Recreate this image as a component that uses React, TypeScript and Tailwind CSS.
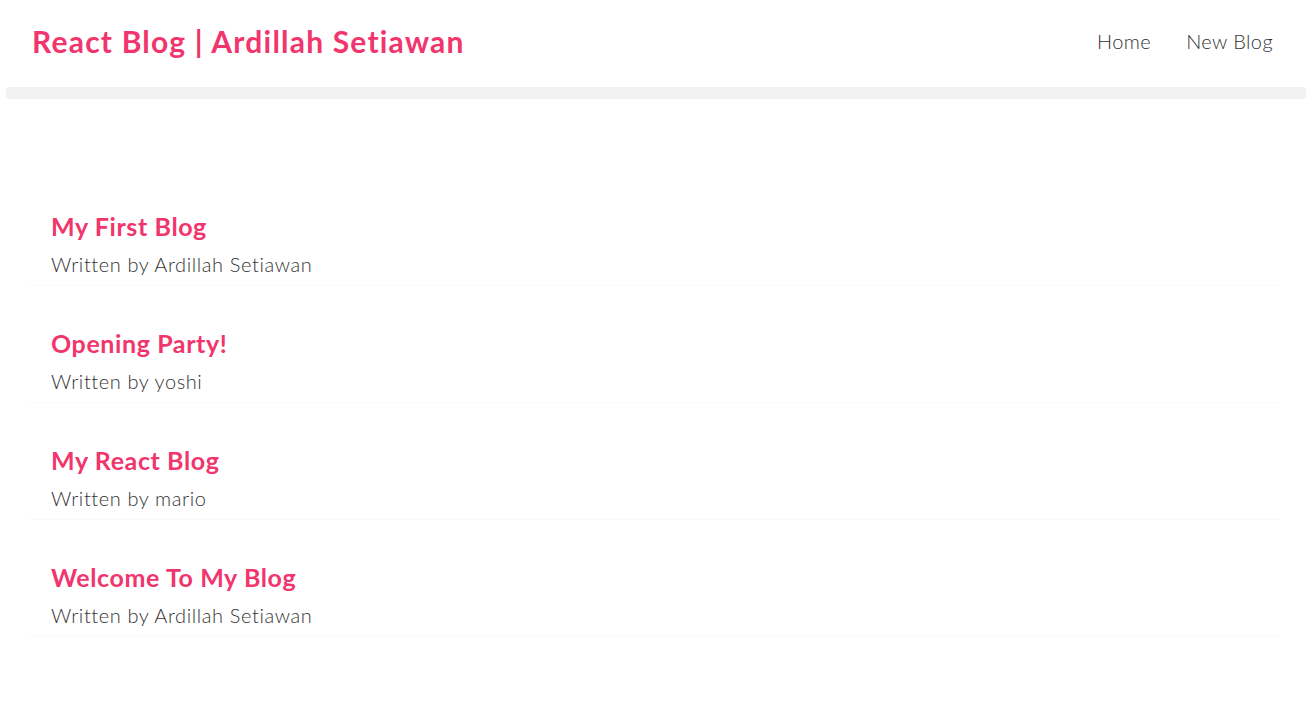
import React from 'react';

const blogs = [
  { id: 1, title: 'My First Blog', author: 'Ardillah Setiawan' },
  { id: 2, title: 'Opening Party!', author: 'yoshi' },
  { id: 3, title: 'My React Blog', author: 'mario' },
  { id: 4, title: 'Welcome To My Blog', author: 'Ardillah Setiawan' },
];

const font = { fontFamily: 'Lato, "Noto Sans", sans-serif' };

export default function App() {
  return (
    <div className="min-h-[721px] bg-white" style={font}>
      <nav className="flex h-[87px] items-center justify-between pb-[5px] pl-[32px] pr-[41px]">
        <h1 className="text-[30px] font-bold tracking-[1.2px] text-[#f1356d]">React Blog | Ardillah Setiawan</h1>
        <div className="flex items-center gap-[35px] text-[20px] font-light tracking-[0.4px] text-[#333]">
          <a href="#">Home</a>
          <a href="#">New Blog</a>
        </div>
      </nav>
      <div className="ml-[6px] mr-[8px] h-[12px] rounded-[3px] bg-[#f2f2f2]" />

      <div className="mt-[100px] flex flex-col gap-[30px] pl-[30px] pr-[34px]">
        {blogs.map((blog) => (
          <div key={blog.id} className="border-b border-[#fafafa] pb-[9px] pl-[21px] pt-[12px]">
            <h2 className="text-[25px] font-bold leading-[30px] tracking-[0.6px] text-[#f1356d]">{blog.title}</h2>
            <p className="mt-[11px] text-[20px] font-light leading-[24px] tracking-[0.6px] text-[#333]">Written by {blog.author}</p>
          </div>
        ))}
      </div>
    </div>
  );
}
